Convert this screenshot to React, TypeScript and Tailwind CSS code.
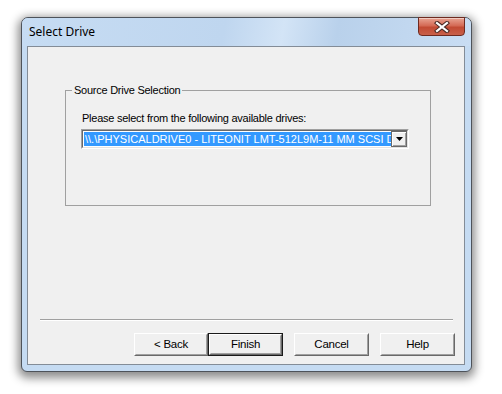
const font = { fontFamily: '"Liberation Sans", Arial, sans-serif' }

const CloseButton = () => (
  <div className="absolute top-[-1px] right-[6px] flex h-[19px] w-[47px] items-center justify-center rounded-b-[4px] border border-[#6e2a20] bg-[linear-gradient(180deg,#e8a493_0%,#d46a55_45%,#c24a33_55%,#c8604a_100%)] shadow-[inset_0_1px_0_rgba(255,255,255,0.45)]">
    <svg width="16" height="12" viewBox="0 0 16 12">
      <path d="M3 2 L13 10 M13 2 L3 10" stroke="#4a2a25" strokeWidth="4.2" strokeLinecap="square" />
      <path d="M3 2 L13 10 M13 2 L3 10" stroke="#ffffff" strokeWidth="2.2" strokeLinecap="square" />
    </svg>
  </div>
)

const DialogButton = ({ label, primary = false, w = 'w-[75px]' }: { label: string; primary?: boolean; w?: string }) => (
  <div className={`${w} h-[23px] ${primary ? 'border border-[#1a1a1a]' : ''}`}>
    <div className="h-full border border-t-white border-l-white border-b-[#696969] border-r-[#696969]">
      <div className="flex h-full items-center justify-center border border-t-[#f0f0f0] border-l-[#f0f0f0] border-b-[#a0a0a0] border-r-[#a0a0a0] bg-[#f0f0f0] text-[11.5px] text-black">
        {label}
      </div>
    </div>
  </div>
)

export default function App() {
  return (
    <div className="h-[394px] w-[502px] bg-white pl-[21px] pt-[17px]" style={font}>
      <div className="relative flex h-[355px] w-[451px] flex-col rounded-t-[7px] rounded-b-[6px] border border-[#4e535a] bg-[#c5dbf2] shadow-[0px_3px_10px_3px_rgba(0,0,0,0.45)]">
        <div
          className="flex h-[28px] items-center rounded-t-[6px] bg-[linear-gradient(100deg,#c6dcf3_0%,#bfd6ef_45%,#d3e4f6_58%,#b9d1eb_70%,#c9ddf3_100%)] pl-[7px] text-[12px] text-black"
          style={{ fontFamily: '"Noto Sans", "Open Sans", sans-serif' }}
        >
          Select Drive
        </div>
        <CloseButton />

        <div className="mb-[6px] ml-[5px] mr-[6px] flex flex-1 flex-col border border-[#838c97] bg-[#f0f0f0] text-[11px] tracking-[-0.25px] text-black">
          <div className="relative ml-[37px] mt-[43px] h-[116px] w-[366px] border border-[#a0a0a0] pl-[15px] pt-[20px]">
            <span className="absolute left-[6px] top-[-8px] bg-[#f0f0f0] px-[2px] leading-[14px]">
              Source Drive Selection
            </span>
            <div className="ml-[1px] leading-[14px]">Please select from the following available drives:</div>
            <div className="mt-[4px] h-[20px] w-[328px] border border-t-[#a0a0a0] border-l-[#a0a0a0] border-b-white border-r-white">
              <div className="flex h-full border border-t-[#696969] border-l-[#696969] border-b-[#e3e3e3] border-r-[#e3e3e3] bg-white">
                <div className="my-[1px] ml-[1px] flex flex-1 items-center overflow-hidden whitespace-nowrap bg-[#3399ff] pl-[1px] tracking-normal text-white">
                  \\.\PHYSICALDRIVE0 - LITEONIT LMT-512L9M-11 MM SCSI D
                </div>
                <div className="flex h-full w-[16px] items-center justify-center border border-[#6a6a6a] bg-[#f0f0f0] shadow-[inset_1px_1px_0_#ffffff,inset_-1px_-1px_0_#a0a0a0]">
                  <svg width="7" height="4" viewBox="0 0 7 4">
                    <path d="M0 0 H7 L3.5 4 Z" fill="#000" />
                  </svg>
                </div>
              </div>
            </div>
          </div>

          <div className="ml-[12px] mt-auto w-[413px] border-t border-b border-t-[#a0a0a0] border-b-white" />

          <div className="mt-[12px] flex justify-end pb-[8px] pr-[9px]">
            <DialogButton label="< Back" w="w-[74px]" />
            <DialogButton label="Finish" primary />
            <div className="w-[11px]" />
            <DialogButton label="Cancel" />
            <div className="w-[11px]" />
            <DialogButton label="Help" />
          </div>
        </div>
      </div>
    </div>
  )
}
